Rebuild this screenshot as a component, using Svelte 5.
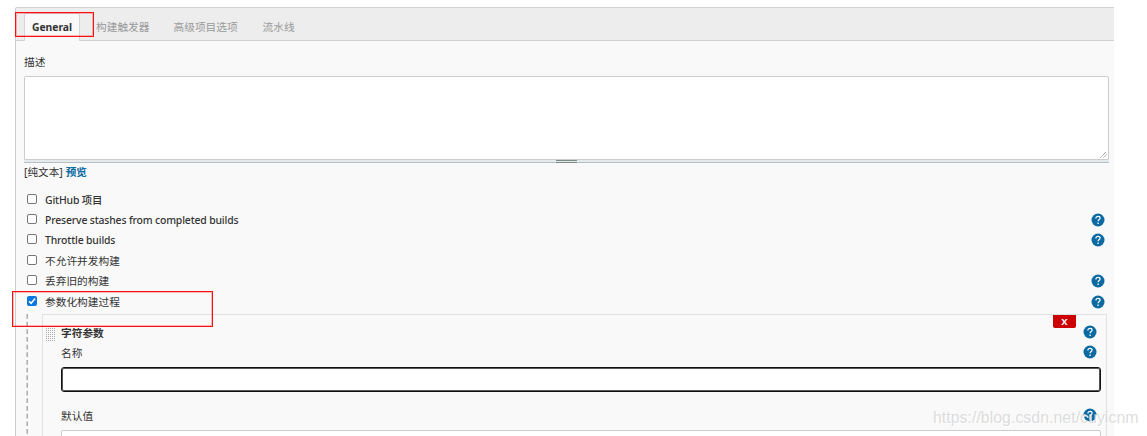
<script>
  const options = [
    { label: 'GitHub 项目', latin: true },
    { label: 'Preserve stashes from completed builds', help: true, latin: true },
    { label: 'Throttle builds', help: true, latin: true },
    { label: '不允许并发构建' },
    { label: '丢弃旧的构建', help: true },
    { label: '参数化构建过程', help: true, checked: true }
  ];
</script>

{#snippet help()}
  <svg class="help" viewBox="0 0 14 14" aria-hidden="true">
    <circle cx="7" cy="7" r="6.5" fill="#0b6aa2" />
    <path d="M4.9 5.4C4.9 4 5.8 3.3 7 3.3s2.1.7 2.1 1.8c0 1.5-2 1.5-2 3.2" fill="none" stroke="#fff" stroke-width="1.2" />
    <rect x="6.4" y="9.5" width="1.4" height="1.4" fill="#fff" />
  </svg>
{/snippet}

<div class="page">
  <main class="panel">
    <nav class="tabs">
      <span class="tab active">General</span>
      <span class="tab trigger">构建触发器</span>
      <span class="tab advanced">高级项目选项</span>
      <span class="tab">流水线</span>
    </nav>
    <div class="body">
      <div class="desc">描述</div>
      <div class="textarea">
        <svg class="grip" viewBox="0 0 8 8"><path d="M0.5 7.5L7 1M4 7.5L7.5 4" stroke="#777" stroke-width="1" stroke-dasharray="1.4 .5" /></svg>
      </div>
      <div class="handle"><i></i></div>
      <div class="format"><span>[纯文本]</span><b>预览</b></div>
      <div class="options">
        {#each options as o}
          <div class="row">
            <span class="check" class:on={o.checked}>
              {#if o.checked}<svg viewBox="0 0 10 10"><path d="M2 5.2L4.1 7.3L8.1 2.5" fill="none" stroke="#fff" stroke-width="1.5" /></svg>{/if}
            </span>
            <span class="label" class:latin={o.latin}>{o.label}</span>
            {#if o.help}{@render help()}{/if}
          </div>
        {/each}
      </div>
      <div class="nested">
        <svg class="dash" width="2" height="124"><path d="M1.2 0V124" stroke="#aaa" stroke-width="1.5" stroke-dasharray="4.7 2.97" /></svg>
        <section class="param">
          <span class="delete">X</span>
          <svg class="drag" width="9" height="14">
            <defs><pattern id="dots" width="2" height="2" patternUnits="userSpaceOnUse"><rect width="1" height="1" fill="#aaa" /></pattern></defs>
            <rect width="9" height="14" fill="url(#dots)" />
          </svg>
          <div class="fields">
            <div class="line title"><b>字符参数</b>{@render help()}</div>
            <div class="line name"><span>名称</span>{@render help()}</div>
            <div class="input focus"></div>
            <div class="line default"><span>默认值</span>{@render help()}</div>
            <div class="input"></div>
          </div>
        </section>
      </div>
    </div>
  </main>
  <div class="mark mark-tab"></div>
  <div class="mark mark-option"></div>
  <span class="watermark">https://blog.csdn.net/cuyicnm</span>
</div>

<style>
  :global(body) { margin: 0; background: #fff; }
  .page { position: relative; width: 1147px; height: 436px; overflow: hidden; box-sizing: border-box; padding: 7px 33px 0 15px; background: #fff; font: 11px/14px "Noto Sans", "Noto Sans CJK SC", sans-serif; color: #333; }
  .page * { box-sizing: border-box; }
  .panel { height: 440px; background: #f9f9f9; border-left: 1px solid #ccc; border-top: 1px solid #d2d2d2; border-top-left-radius: 2px; }
  .tabs { height: 33px; display: flex; padding: 5px 0 0 8px; background: #ededed; border-bottom: 1px solid #d2d2d2; }
  .tab { color: #999; line-height: 28px; white-space: nowrap; font-size: 10.7px; }
  .active { width: 56px; height: 28px; text-align: center; background: #f9f9f9; border: 1px solid #d5d5d5; border-bottom: 0; border-radius: 2px 2px 0 0; color: #333; font-weight: 700; line-height: 27px; font-size: 10.3px; }
  .trigger { margin-left: 16px; width: 77.5px; }
  .advanced { width: 89px; }
  .body { padding: 14px 0 0 8px; }
  .desc { height: 21px; font-size: 10.7px; }
  .textarea { width: 1085px; height: 84px; background: #fff; border: 1px solid #ccc; border-radius: 2px 2px 0 0; display: flex; align-items: flex-end; justify-content: flex-end; padding: 0 1px 1px 0; }
  .grip { width: 7px; height: 7px; }
  .handle { width: 1085px; height: 3px; background: #e5eaed; border-bottom: 1px solid #b5bfc4; display: flex; justify-content: center; }
  .handle i { width: 21px; height: 3px; border-top: 1px solid #7d8983; border-bottom: 1px solid #7d8983; }
  .format { height: 26.4px; display: flex; gap: 3px; font-size: 10.6px; line-height: 18px; }
  .format b { color: #0b6aa2; }
  .row { height: 20.4px; display: flex; align-items: center; padding: 0 10px 0 3px; }
  .check { width: 10px; height: 10px; border: 1px solid #777; border-radius: 2px; background: #fff; margin-right: 8px; position: relative; top: -1px; }
  .on { background: #0875e1; border: 0; }
  .on svg { display: block; width: 10px; height: 10px; }
  .label { font-size: 10.7px; }
  .latin { font-size: 10.4px; font-weight: 500; letter-spacing: -.14px; }
  .help { width: 14px; height: 14px; margin-left: auto; flex: none; }
  .row .help { margin-right: -1px; }
  .nested { display: flex; margin-top: 2.2px; padding-left: 2px; height: 130px; }
  .dash { flex: none; }
  .param { position: relative; margin-left: 14px; width: 1065px; border: 1px solid #e1e1e1; border-bottom: 0; display: flex; padding: 13px 0 0 3px; }
  .delete { position: absolute; right: 30px; top: 0; width: 23px; height: 13px; border-radius: 0 0 2px 2px; background: #c00; color: #fff; font-weight: 700; font-size: 9.5px; line-height: 14px; text-align: center; }
  .drag { flex: none; margin-right: 6px; }
  .fields { width: 1040px; margin-top: -5px; }
  .line { height: 20px; display: flex; align-items: center; font-size: 10.7px; padding-right: 4px; }
  .line .help { margin-top: -2px; }
  .name { height: 24px; align-items: flex-start; padding-top: 3px; }
  .name .help { margin-top: -1px; }
  .input { width: 1040px; height: 25px; background: #fff; border: 1px solid #ccc; border-radius: 2px; }
  .focus { border: 1px solid #111; box-shadow: inset 0 0 0 1px #555; border-radius: 3px; }
  .default { height: 38px; padding-top: 10px; }
  .mark { position: absolute; border: 1px solid #fa1010; box-shadow: inset 0 0 0 1px rgba(250, 30, 30, .3); }
  .mark-tab { left: 15px; top: 12px; width: 79px; height: 25px; }
  .mark-option { left: 12px; top: 291px; width: 201px; height: 36px; }
  .watermark { position: absolute; left: 933px; top: 408px; font: 15.95px/20px "Liberation Sans", sans-serif; color: rgba(210,210,210,.75); white-space: nowrap; text-shadow: 1px 1px 0 #fff; }
</style>
